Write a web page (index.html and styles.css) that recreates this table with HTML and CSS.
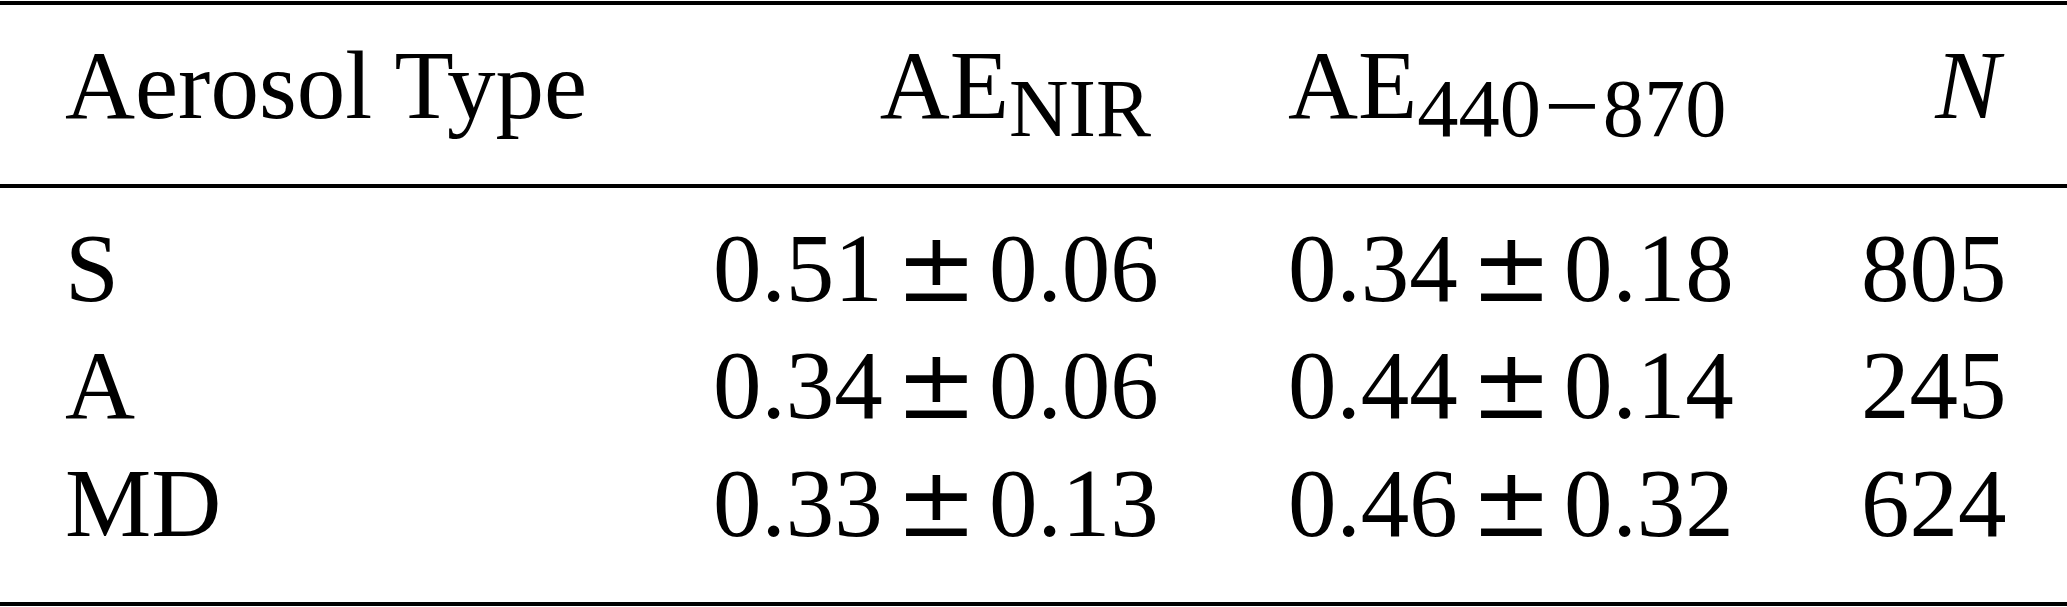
FILE: index.html
```html
<!DOCTYPE html>
<html lang="en">

<head>
    <meta charset="UTF-8">
    <meta name="viewport" content="width=device-width, initial-scale=1.0">
    <title>Aerosol Types</title>
    <link rel="stylesheet" href="styles.css">
</head>

<body>
    <!-- Angstrom exponent statistics per aerosol type -->
    <table class="aerosol-table">
        <colgroup>
            <col class="col-type">
            <col class="col-nir">
            <col class="col-ae">
            <col class="col-n">
        </colgroup>
        <thead>
            <tr>
                <th class="type">Aerosol Type</th>
                <th>AE<sub class="sub">NIR</sub></th>
                <th>AE<sub class="sub">440<span class="minus">−</span>870</sub></th>
                <th><i class="var">N</i></th>
            </tr>
        </thead>
        <tbody>
            <tr>
                <td class="type">S</td>
                <td>0.51<span class="pm">±</span>0.06</td>
                <td>0.34<span class="pm">±</span>0.18</td>
                <td>805</td>
            </tr>
            <tr>
                <td class="type">A</td>
                <td>0.34<span class="pm">±</span>0.06</td>
                <td>0.44<span class="pm">±</span>0.14</td>
                <td>245</td>
            </tr>
            <tr>
                <td class="type">MD</td>
                <td>0.33<span class="pm">±</span>0.13</td>
                <td>0.46<span class="pm">±</span>0.32</td>
                <td>624</td>
            </tr>
        </tbody>
    </table>
</body>

</html>
```

FILE: styles.css
```css
/* Booktabs-like table, scaled up */
body {
    margin: 0;
    padding-top: 1px;
    background: #fff;
    color: #000;
    font-family: "Liberation Serif", "Times New Roman", serif;
}

.aerosol-table {
    width: 100%;
    table-layout: fixed;
    border-collapse: separate;
    border-spacing: 0;
    border-top: 4px solid #000;
    border-bottom: 4px solid #000;
    font-size: 97px;
    line-height: 117.5px;
}

.col-type { width: 647px; }
.col-nir  { width: 575px; }
.col-ae   { width: 573px; }
.col-n    { width: 272px; }

.aerosol-table th,
.aerosol-table td {
    padding: 0 66px;
    text-align: right;
    font-weight: normal;
    white-space: nowrap;
}

.aerosol-table .type {
    text-align: left;
    padding-left: 65px;
}

.aerosol-table thead th {
    padding-top: 21.5px;
    padding-bottom: 39.5px;
    border-bottom: 4px solid #000;
}

.aerosol-table tbody tr:first-child td {
    padding-top: 22px;
}

.aerosol-table tbody tr:last-child td {
    padding-bottom: 40px;
}

/* subscripts: keep them out of the line box height */
.sub {
    font-size: 0.85em;
    vertical-align: -18px;
    line-height: 0;
    margin-right: 5px;
}

.minus {
    font-size: 1.2em;
    vertical-align: -0.04em;
    margin: 0 3px;
}

/* the math-style plus-minus is larger than the text one */
.pm {
    font-family: "DejaVu Serif", serif;
    line-height: 0;
    margin: 0 12px 0 13px;
}

.var {
    margin-right: 1px;
}
```
